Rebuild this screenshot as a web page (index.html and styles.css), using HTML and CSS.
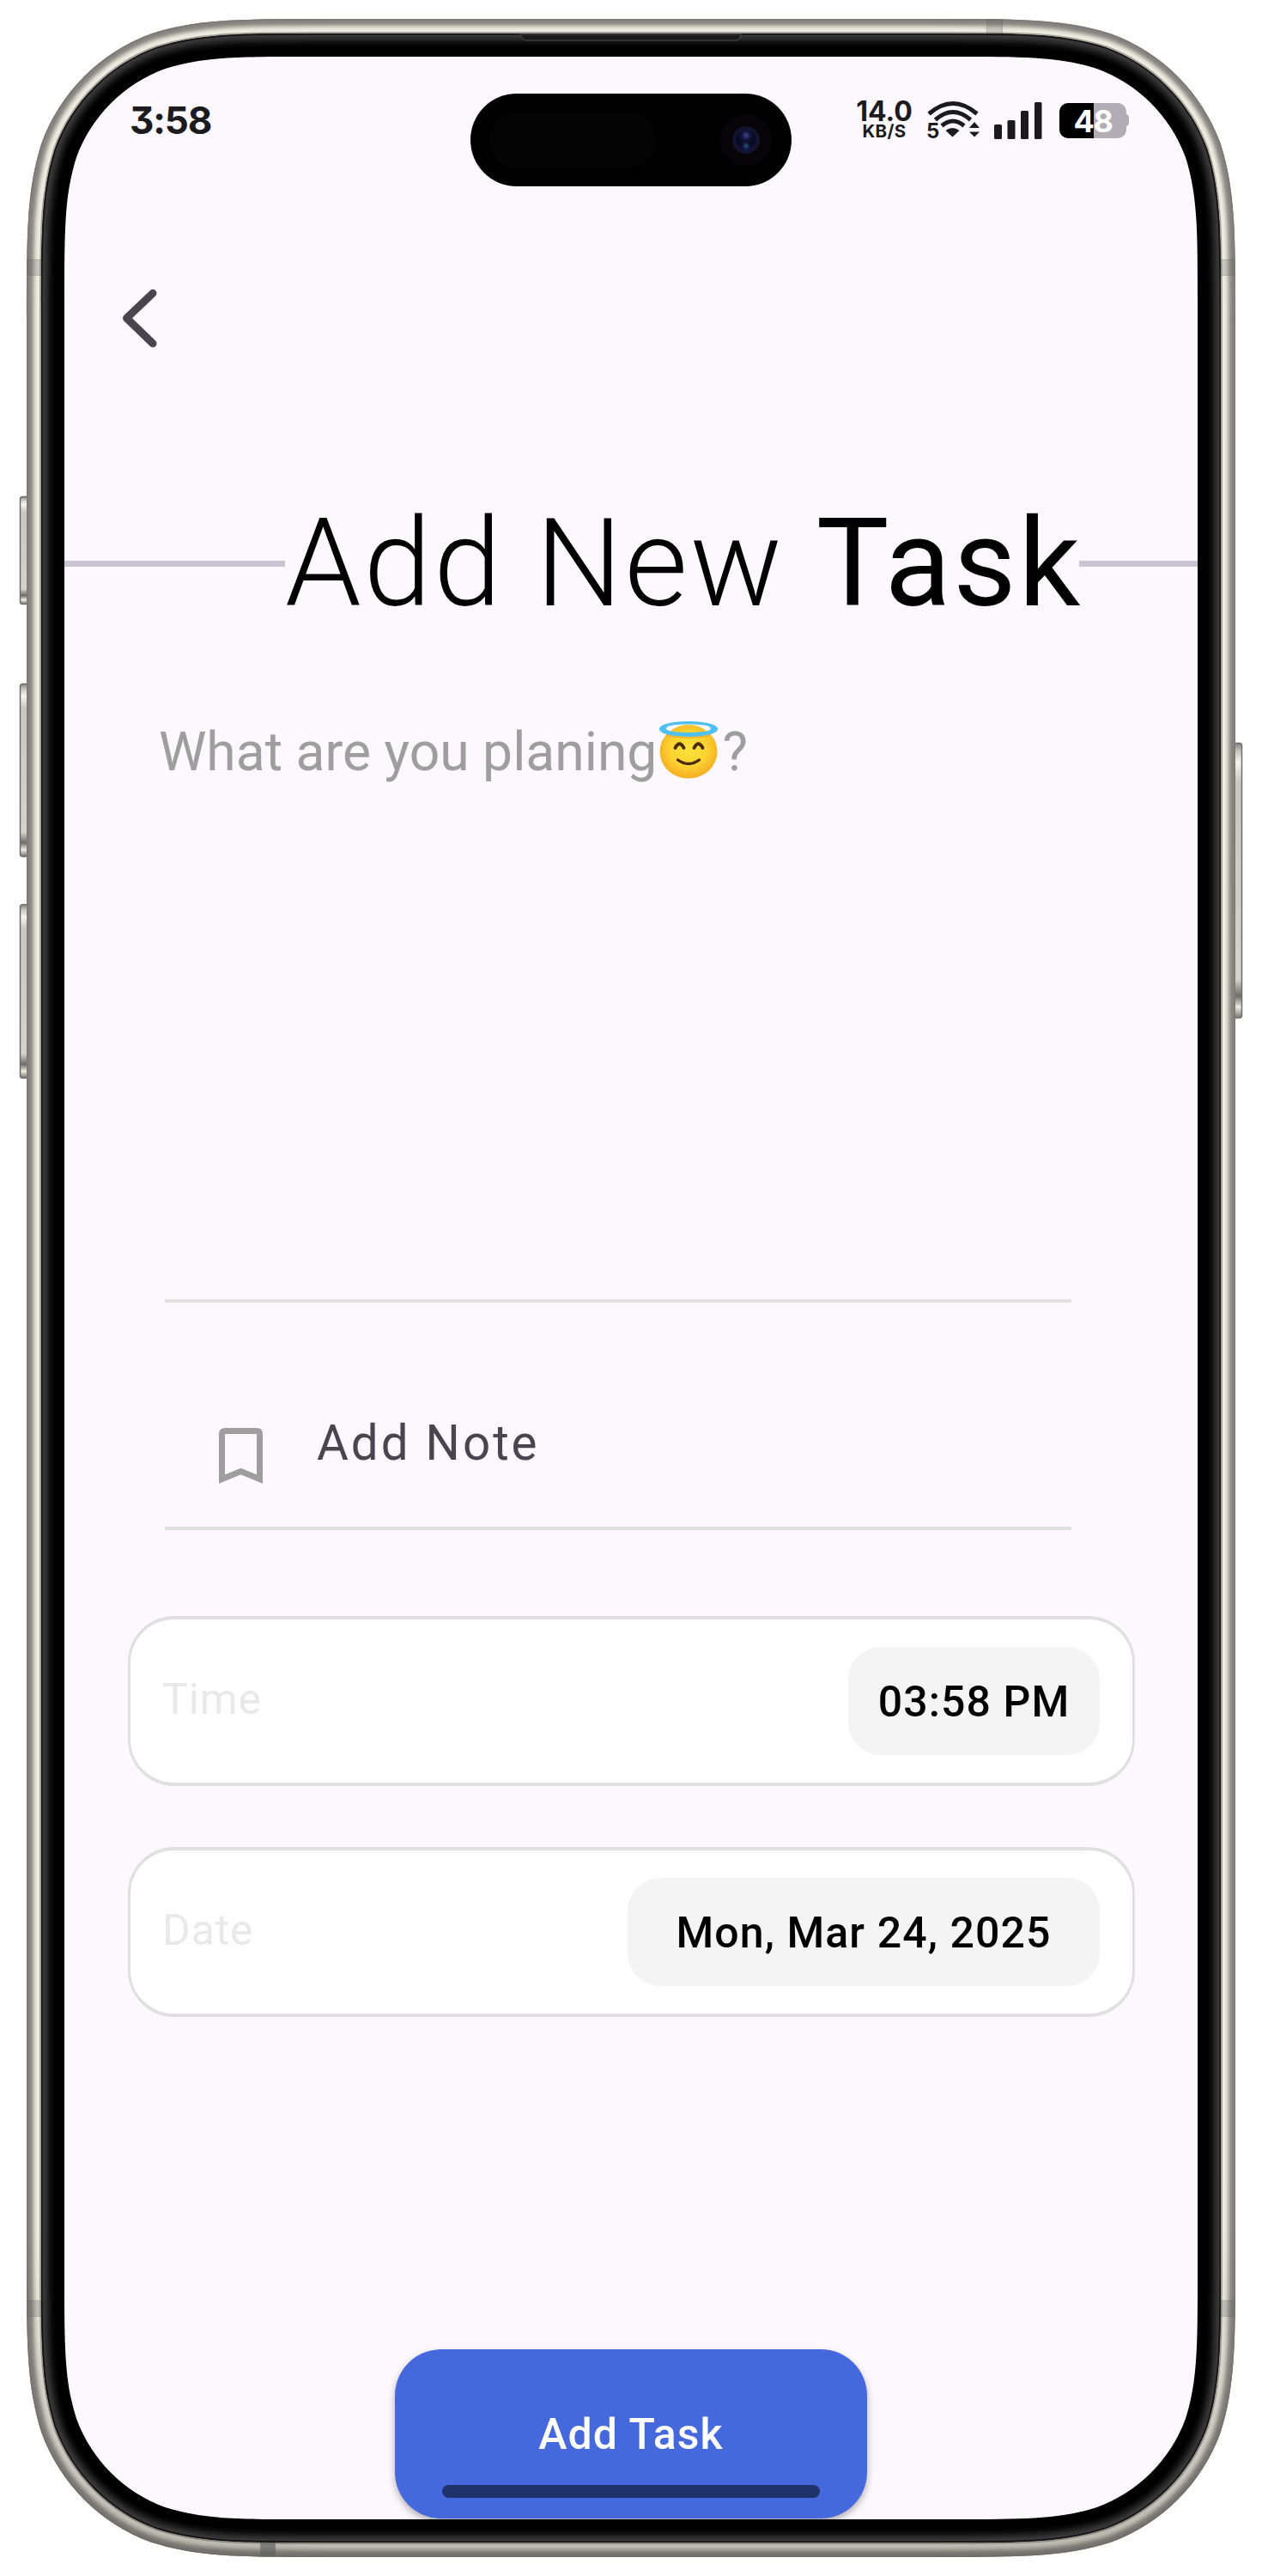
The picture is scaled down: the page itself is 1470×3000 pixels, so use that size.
FILE: index.html
```html
<!DOCTYPE html>
<html lang="en">
<head>
<meta charset="utf-8">
<title>Add New Task</title>
<link rel="stylesheet" href="styles.css">
</head>
<body>
<div class="phone">
  <svg class="frame" viewBox="0 0 1470 3000" aria-hidden="true">
    <defs>
      <path id="outer" d="M382.59 22H1087.41c101.24 0 151.86 0 206.35 17.23c59.49 21.65 106.36 68.52 128.01 128.01c17.23 54.49 17.23 105.11 17.23 206.35V2626.41c0 101.24 0 151.86 -17.23 206.35c-21.65 59.49 -68.52 106.36 -128.01 128.01c-54.49 17.23 -105.11 17.23 -206.35 17.23H382.59c-101.24 0 -151.86 0 -206.35 -17.23c-59.49 -21.65 -106.36 -68.52 -128.01 -128.01c-17.23 -54.49 -17.23 -105.11 -17.23 -206.35V373.59c0 -101.24 0 -151.86 17.23 -206.35c21.65 -59.49 68.52 -106.36 128.01 -128.01c54.49 -17.23 105.11 -17.23 206.35 -17.23z"/>
      <path id="bezel" d="M373.6 39H1096.4c93.76 0 140.64 0 191.1 15.96c55.1 20.05 98.5 63.45 118.55 118.55c15.96 50.46 15.96 97.34 15.96 191.1V2635.4c0 93.76 0 140.64 -15.96 191.1c-20.05 55.1 -63.45 98.5 -118.55 118.55c-50.46 15.96 -97.34 15.96 -191.1 15.96H373.6c-93.76 0 -140.64 0 -191.1 -15.96c-55.1 -20.05 -98.5 -63.45 -118.55 -118.55c-15.96 -50.46 -15.96 -97.34 -15.96 -191.1V364.6c0 -93.76 0 -140.64 15.96 -191.1c20.05 -55.1 63.45 -98.5 118.55 -118.55c50.46 -15.96 97.34 -15.96 191.1 -15.96z"/>
      <clipPath id="outerClip"><use href="#outer"/></clipPath>
      <clipPath id="bezelClip"><use href="#bezel"/></clipPath>
      <filter id="soft" x="0" y="0" width="1470" height="3000" filterUnits="userSpaceOnUse"><feGaussianBlur stdDeviation="2.4"/></filter>
      <filter id="softer" x="0" y="0" width="1470" height="3000" filterUnits="userSpaceOnUse"><feGaussianBlur stdDeviation="4"/></filter>
      <linearGradient id="shade" x1="0" y1="0" x2="0" y2="1">
        <stop offset="0" stop-color="#55524e" stop-opacity="0"/>
        <stop offset="1" stop-color="#55524e" stop-opacity=".34"/>
      </linearGradient>
      <linearGradient id="key" x1="0" y1="0" x2="0" y2="1">
        <stop offset="0" stop-color="#858380"/>
        <stop offset=".03" stop-color="#c9c7c0"/>
        <stop offset=".07" stop-color="#f6f5ee"/>
        <stop offset=".14" stop-color="#c9c7c0"/>
        <stop offset=".86" stop-color="#d5d3ca"/>
        <stop offset=".92" stop-color="#6e6c69"/>
        <stop offset=".96" stop-color="#edebe3"/>
        <stop offset="1" stop-color="#77756f"/>
      </linearGradient>
      <radialGradient id="glass" cx=".5" cy=".28" r=".75">
        <stop offset="0" stop-color="#43468f"/>
        <stop offset=".28" stop-color="#14143d"/>
        <stop offset=".6" stop-color="#07071c"/>
        <stop offset="1" stop-color="#101046"/>
      </radialGradient>
      <radialGradient id="glint">
        <stop offset="0" stop-color="#1c6a78"/>
        <stop offset="1" stop-color="#2a1660" stop-opacity="0"/>
      </radialGradient>
    </defs>
    <g stroke="#6f6d6a" stroke-width="1.5">
      <rect x="23.5" y="578.500" width="12" height="125" rx="3" fill="url(#key)"/>
      <rect x="23.5" y="796.500" width="12" height="201" rx="3" fill="url(#key)"/>
      <rect x="23.5" y="1053.500" width="12" height="202" rx="3" fill="url(#key)"/>
      <rect x="1434.5" y="865.500" width="12" height="320" rx="3" fill="url(#key)"/>
    </g>
    <g clip-path="url(#outerClip)" fill="none">
      <use href="#outer" fill="#efede2"/>
      <use href="#outer" stroke="#85827e" stroke-width="16" filter="url(#soft)"/>
      <use href="#outer" stroke="#7c7976" stroke-width="3"/>
      <use href="#bezel" stroke="#a5a39b" stroke-width="4"/>
      <rect x="0" y="2600" width="1470" height="378" fill="url(#shade)"/>
      <g fill="#5d5f5c" fill-opacity=".25" stroke="#5d5f5c" stroke-opacity=".3">
        <rect x="25" y="302.500" width="30" height="18"/>
        <rect x="1415" y="302.500" width="30" height="18"/>
        <rect x="25" y="2679.500" width="30" height="18"/>
        <rect x="1415" y="2679.500" width="30" height="18"/>
        <rect x="1149.500" y="15" width="18" height="30"/>
        <rect x="303.500" y="2955" width="17" height="30" fill-opacity=".65"/>
      </g>
    </g>
    <g clip-path="url(#bezelClip)" fill="none">
      <use href="#bezel" fill="#000"/>
      <use href="#bezel" stroke="#3c3d3e" stroke-width="16" filter="url(#softer)"/>
      <use href="#bezel" stroke="#111" stroke-width="3"/>
    </g>
    <path d="M606 40l3 5q1 2 4 2H857q3 0 4-2l3-5z" fill="#1b1b1b" stroke="#4b4b4b"/>
    <path fill="#fdf7fe" d="M359.33 66H1110.67c81.87 0 122.81 0 166.87 13.93c48.11 17.51 86.01 55.41 103.52 103.52c13.93 44.07 13.93 85 13.93 166.87V2649.67c0 81.87 0 122.81 -13.93 166.87c-17.51 48.11 -55.41 86.01 -103.52 103.52c-44.07 13.93 -85 13.93 -166.87 13.93H359.33c-81.87 0 -122.81 0 -166.87 -13.93c-48.11 -17.51 -86.01 -55.41 -103.52 -103.52c-13.93 -44.07 -13.93 -85 -13.93 -166.87V350.33c0 -81.87 0 -122.81 13.93 -166.87c17.51 -48.11 55.41 -86.01 103.52 -103.52c44.07 -13.93 85 -13.93 166.87 -13.93z"/>
    <rect x="548" y="109" width="374" height="108" rx="54" fill="#000"/>
    <rect x="570" y="130" width="194" height="66" rx="33" fill="#040404"/>
    <circle cx="869" cy="163" r="30" fill="#080509"/>
    <circle cx="869" cy="163" r="16" fill="#131430"/>
    <circle cx="869" cy="163" r="12" fill="url(#glass)"/>
    <circle cx="869" cy="170" r="6" fill="url(#glint)"/>
  </svg>

  <main class="screen">
    <header class="status">
      <span class="clock">3:58</span>
      <div class="indicators">
        <div class="speed"><span class="rate">14.0</span><span class="unit">KB/S</span></div>
        <svg class="wifi" viewBox="0 0 64 46">
          <g fill="none" stroke="#1b1a1d" stroke-width="5">
            <path d="M3 15.500Q31 -8.500 59 15.500"/>
            <path d="M10.500 22.500Q31 4.500 51.500 22.500"/>
            <path d="M18 29.500Q31 18.500 44 29.500"/>
          </g>
          <path d="M22.500 35Q30.500 29 38.500 35L30.500 42.500z" fill="#1b1a1d"/>
          <path d="M50 32L56 25L62 32zM50 36.500H62L56 42.500z" fill="#1b1a1d"/>
          <text class="band" x="0" y="43.500">5</text>
        </svg>
        <svg class="bars" viewBox="0 0 56 43" fill="#1b1a1d">
          <rect x="0" y="26" width="9" height="17" rx="1.500"/>
          <rect x="15.500" y="21" width="9" height="22" rx="1.500"/>
          <rect x="31" y="10" width="9" height="33" rx="1.500"/>
          <rect x="47" y="0" width="8.500" height="43" rx="1.500"/>
        </svg>
        <div class="battery"><span>48</span></div>
      </div>
    </header>

    <svg class="back" viewBox="0 0 60 84"><path d="M43 13.500L12.500 42.500L43 72" fill="none" stroke="#49454f" stroke-width="9" stroke-linecap="round" stroke-linejoin="round"/></svg>

    <div class="heading">
      <span class="rule"></span>
      <h1>Add New <b>Task</b></h1>
      <span class="rule"></span>
    </div>

    <div class="plan">
      <span>What are you planing</span>
      <svg class="angel" viewBox="0 0 68 67">
        <defs><radialGradient id="face" cx=".5" cy=".45" r=".55"><stop offset="0" stop-color="#ffe23a"/><stop offset=".6" stop-color="#fdd231"/><stop offset="1" stop-color="#f4ac22"/></radialGradient></defs>
        <ellipse cx="34" cy="35.300" rx="33.500" ry="31.300" fill="url(#face)"/>
        <path d="M7 11C14 16 54 16 61 11L59 17C48 21 20 21 9 17z" fill="#f4a821" opacity=".6"/>
        <path fill-rule="evenodd" fill="#50c0ef" d="M34 0C53 0 68 3.500 68 9S53 18 34 18S0 14.500 0 9S15 0 34 0zM34 3.500C19 3.500 8 5.500 8 8.500S19 13 34 13S60 11.500 60 8.500S49 3.500 34 3.500z"/>
        <path d="M8.500 8Q9 4.500 22 4Q15 6 13.500 11.500Q8.500 10 8.500 8zM59.500 8Q59 4.500 46 4Q53 6 54.500 11.500Q59.500 10 59.500 8z" fill="#fdf7ff"/>
        <g fill="none" stroke="#4a2b0c" stroke-width="3.800" stroke-linecap="round">
          <path d="M18.500 31Q23.500 21.500 28.500 31M40.500 31Q45.500 21.500 50.500 31"/>
          <path d="M21.500 45Q34 54 46.500 45" stroke-width="3.300"/>
        </g>
      </svg>
      <span>?</span>
    </div>
    <hr class="divider">
    <div class="note">
      <svg class="bookmark" viewBox="0 0 51 65"><path d="M3.500 59.500V7Q3.500 3.500 7 3.500H44Q47.500 3.500 47.500 7V59.500L25.500 50.500z" fill="none" stroke="#9e9e9e" stroke-width="7"/></svg>
      <span>Add Note</span>
    </div>
    <hr class="divider">

    <section class="field"><span class="label time">Time</span><span class="value">03:58 PM</span></section>
    <section class="field"><span class="label date">Date</span><span class="value long">Mon, Mar 24, 2025</span></section>

    <button class="submit"><span>Add Task</span><i class="home"></i></button>
  </main>
</div>
</body>
</html>
```
FILE: styles.css
```css
* { box-sizing: border-box; }
body { margin: 0; background: #fff; font-family: Roboto, "Liberation Sans", sans-serif; }

.phone { position: relative; width: 1470px; height: 3000px; padding: 66px 75px; }
.frame { position: absolute; left: 0; top: 0; width: 1470px; height: 3000px; }
.screen { position: relative; display: flex; flex-direction: column; width: 1320px; height: 2868px; overflow: hidden; }

.status { display: flex; justify-content: space-between; align-items: center; height: 148px; padding: 0 83px 0 76px; color: #1b1a1d; font-family: Inter, sans-serif; font-weight: 650; }
.clock { font-size: 44px; line-height: 50px; letter-spacing: -1.2px; font-feature-settings: "cv09" 1; }
.indicators { display: flex; align-items: center; height: 44px; }
.speed { display: flex; flex-direction: column; align-items: center; width: 66px; margin-right: 16px; }
.rate { font-size: 32px; line-height: 26px; letter-spacing: 0; }
.unit { font-size: 20.5px; line-height: 20px; letter-spacing: .3px; }
.wifi { width: 64px; height: 46px; margin-right: 15px; overflow: visible; }
.band { font: 700 24px Inter, sans-serif; fill: #1b1a1d; }
.bars { width: 56px; height: 43px; margin-right: 20px; }
.battery { position: relative; width: 78px; height: 41px; border-radius: 10px; background: linear-gradient(90deg, #000 40px, #b2adb4 40px); color: #fff; font-size: 36px; line-height: 42px; font-weight: 700; letter-spacing: -1.5px; text-align: center; }
.battery::after { content: ""; position: absolute; right: -3px; top: 13px; width: 4px; height: 14px; border-radius: 0 4px 4px 0; background: #b2adb4; }

.back { width: 60px; height: 84px; margin: 114px 0 0 60px; }

.heading { display: flex; align-items: center; height: 160px; margin-top: 165px; }
.heading h1 { margin: 0; width: 925px; font-size: 142px; line-height: 162px; font-weight: 300; letter-spacing: 2.7px; white-space: nowrap; color: #000; }
.heading b { font-weight: 400; }
.rule { width: 257px; height: 7px; margin-top: -1px; background: #cac4d0; }
.rule:last-child { width: auto; flex: 1; }

.plan { display: flex; align-items: flex-start; height: 776px; padding: 98px 0 0 110px; color: #9e9e9e; font-size: 62.4px; line-height: 81px; white-space: nowrap; }
.angel { width: 68px; height: 67px; margin: 5px 5px 0 3px; }
.divider { width: 1056px; height: 4px; margin: 0 0 0 117px; border: 0; background: #e0e0e0; flex: none; }
.note { display: flex; align-items: flex-start; height: 261px; padding: 146px 0 0 180px; }
.bookmark { width: 51px; height: 65px; margin-right: 63px; }
.note span { color: #49454f; font-size: 56.5px; line-height: 66px; margin-top: -15px; letter-spacing: 3px; }

.field { display: flex; justify-content: space-between; align-items: center; width: 1173px; height: 197.5px; margin: 100px 0 0 74px; padding: 0 38px 0 37px; border: 4px solid #e0e0e0; border-left-width: 3px; border-right-width: 3px; border-radius: 54px; background: #fff; flex: none; font-size: 50px; line-height: 60px; white-space: nowrap; }
.field + .field { margin-top: 71.5px; }
.label { color: #e9e9e9; margin-top: -3px; letter-spacing: .9px; }
.value { width: 293px; height: 126px; border-radius: 38px; background: #f4f4f4; color: #000; font-weight: 500; line-height: 129px; text-align: center; letter-spacing: 1.1px; }
.value.long { width: 550px; }

.submit { display: flex; flex-direction: column; align-items: center; width: 550px; height: 197.5px; margin: 387px 0 0 385px; padding: 69px 0 0; border: 0; border-radius: 54px; background: #4568dc; box-shadow: 0 4px 8px rgba(0,0,0,.3); color: #fff; font: 500 50px/60px Roboto, sans-serif; letter-spacing: 1.1px; flex: none; }
.home { width: 440px; height: 15px; margin-top: 29px; border-radius: 8px; background: #20326a; }
```
